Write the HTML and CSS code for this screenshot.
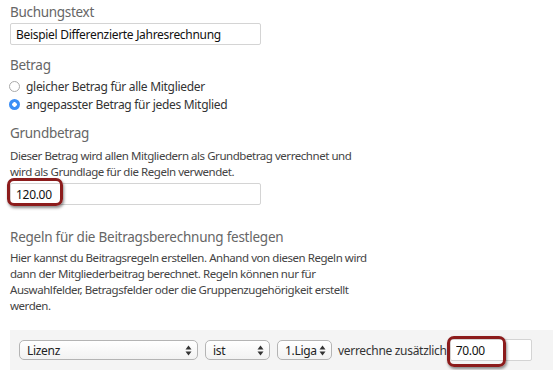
FILE: index.html
```html
<!DOCTYPE html>
<html lang="de">
<head>
  <meta charset="UTF-8" />
  <title>Beitrag</title>
  <link rel="stylesheet" href="styles.css">
</head>
<body>

<div class="form">
  <!-- Buchungstext -->
  <div class="field">
    <label class="field-label">Buchungstext</label>
    <input class="text-input" type="text" value="Beispiel Differenzierte Jahresrechnung" />
  </div>

  <!-- Betrag -->
  <div class="field field-betrag">
    <label class="field-label">Betrag</label>
    <div class="radio-list">
      <div class="radio-row">
        <span class="radio"></span>
        <span>gleicher Betrag für alle Mitglieder</span>
      </div>
      <div class="radio-row">
        <span class="radio checked"></span>
        <span>angepasster Betrag für jedes Mitglied</span>
      </div>
    </div>
  </div>

  <!-- Grundbetrag -->
  <div class="field field-grund">
    <label class="field-label">Grundbetrag</label>
    <p class="hint">Dieser Betrag wird allen Mitgliedern als Grundbetrag verrechnet und<br>wird als Grundlage für die Regeln verwendet.</p>
    <div class="marked">
      <input class="text-input" type="text" value="120.00" />
      <span class="highlight hl-grund"></span>
    </div>
  </div>

  <!-- Regeln -->
  <div class="field field-rules">
    <label class="field-label rules-label">Regeln für die Beitragsberechnung festlegen</label>
    <p class="hint">Hier kannst du Beitragsregeln erstellen. Anhand von diesen Regeln wird<br>dann der Mitgliederbeitrag berechnet. Regeln können nur für<br>Auswahlfelder, Betragsfelder oder die Gruppenzugehörigkeit erstellt<br>werden.</p>
  </div>
</div>

<!-- Rule row -->
<div class="rule-bar">
  <div class="select sel-field">
    <span>Lizenz</span>
    <svg width="7" height="11" viewBox="0 0 7 11"><path d="M3.5 0.5 L6.5 4.5 H0.5 Z M3.5 10.5 L6.5 6.5 H0.5 Z" fill="#333"/></svg>
  </div>
  <div class="select sel-op">
    <span>ist</span>
    <svg width="7" height="11" viewBox="0 0 7 11"><path d="M3.5 0.5 L6.5 4.5 H0.5 Z M3.5 10.5 L6.5 6.5 H0.5 Z" fill="#333"/></svg>
  </div>
  <div class="select sel-value">
    <span>1.Liga</span>
    <svg width="7" height="11" viewBox="0 0 7 11"><path d="M3.5 0.5 L6.5 4.5 H0.5 Z M3.5 10.5 L6.5 6.5 H0.5 Z" fill="#333"/></svg>
  </div>
  <span class="rule-text">verrechne zusätzlich</span>
  <div class="marked">
    <input class="text-input amount" type="text" value="70.00" />
    <span class="highlight hl-amount"></span>
  </div>
</div>

</body>
</html>
```

FILE: styles.css
```css
body {
  font-family: "Noto Sans", sans-serif;
  font-size: 12px;
  letter-spacing: -0.3px;
  margin: 0;
  background-color: #fff;
  color: #333;
}

.form {
  padding: 0 0 0 10px;
}

.field-label {
  display: block;
  font-size: 13.5px;
  letter-spacing: -0.3px;
  line-height: 20px;
  color: #666;
  padding-top: 2px;
}

.text-input {
  display: block;
  box-sizing: border-box;
  width: 251px;
  height: 22px;
  margin-top: 1px;
  padding: 0 5px;
  border: 1px solid #d4d4d4;
  border-radius: 2px;
  font-family: "Noto Sans", sans-serif;
  font-size: 12px;
  letter-spacing: -0.3px;
  color: #111;
  background: #fff;
}

.field-betrag {
  margin-top: 8px;
}

.radio-list {
  margin-top: 2px;
}

.radio-row {
  display: flex;
  align-items: center;
  gap: 6px;
  height: 18.5px;
  color: #333;
}

.radio {
  width: 11px;
  height: 11px;
  border: 1px solid #aaa;
  border-radius: 50%;
  background: #fff;
  box-sizing: border-box;
  margin-left: -1px;
}

.radio.checked {
  border: none;
  background: radial-gradient(circle, #fff 0 2px, #3a8ef6 2.5px);
}

.field-grund {
  margin-top: 7px;
}

.hint {
  margin: 1px 0 0;
  font-size: 11.5px;
  letter-spacing: -0.45px;
  line-height: 16px;
  color: #444;
}

.field-grund .hint {
  margin-top: 5px;
}

.field-grund .text-input {
  margin-top: 3px;
}

.marked {
  position: relative;
}

.highlight {
  position: absolute;
  border: 3px solid #8c1c1c;
  border-radius: 7px;
  box-shadow: 1px 2px 3px rgba(0, 0, 0, 0.45);
  pointer-events: none;
}

.hl-grund {
  left: -3px;
  top: -5px;
  width: 50px;
  height: 22px;
}

.field-rules {
  margin-top: 20px;
}

.rules-label {
  font-size: 13.5px;
  letter-spacing: -0.25px;
}

.rules-label + .hint {
  margin-top: 3px;
}

.rule-bar {
  margin: 16px 0 0 10px;
  height: 40px;
  background-color: #f4f4f4;
  display: flex;
  align-items: center;
  gap: 7px;
  padding-left: 9px;
}

.select {
  box-sizing: border-box;
  height: 20px;
  display: flex;
  align-items: center;
  justify-content: space-between;
  padding: 0 5px 0 7px;
  border: 1px solid #b4b4b4;
  border-radius: 5px;
  background: linear-gradient(#fff, #f2f2f2);
  color: #222;
}

.sel-field { width: 179px; }
.sel-op { width: 65px; }
.sel-value { width: 55px; }

.rule-text {
  color: #333;
  margin-left: -1px;
}

.amount {
  width: 82px;
  margin-top: 0;
  margin-left: -4px;
}

.hl-amount {
  left: -7px;
  top: -3px;
  width: 53px;
  height: 25px;
}
```
